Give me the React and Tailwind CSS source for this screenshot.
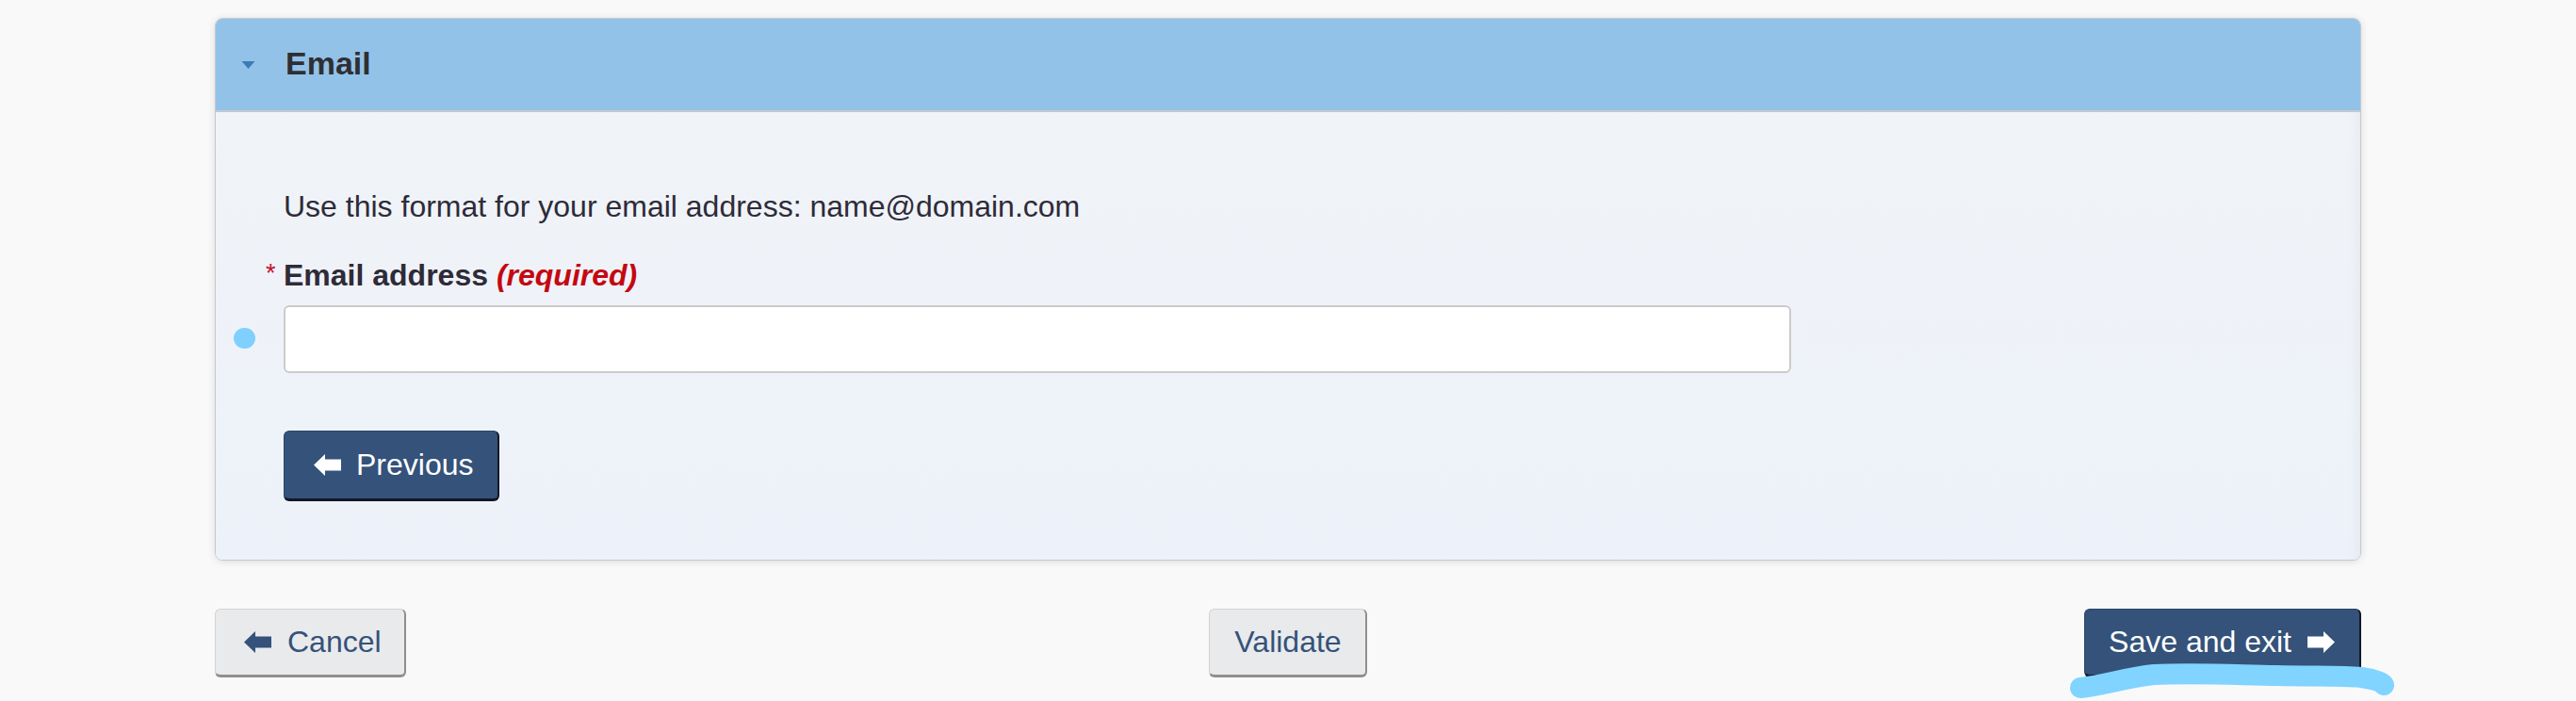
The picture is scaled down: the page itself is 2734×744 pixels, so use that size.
import React from "react";

function ArrowLeft({ className }) {
  return (
    <svg viewBox="0 0 29 23" className={className} fill="currentColor" aria-hidden="true">
      <polygon points="0,11.5 12,0 12,5.5 29,5.5 29,17.5 12,17.5 12,23" />
    </svg>
  );
}

function ArrowRight({ className }) {
  return (
    <svg viewBox="0 0 29 23" className={className} fill="currentColor" aria-hidden="true">
      <polygon points="29,11.5 17,0 17,5.5 0,5.5 0,17.5 17,17.5 17,23" />
    </svg>
  );
}

export default function App() {
  return (
    <div
      className="min-h-screen bg-[#f9f9f9] px-[228px] pt-[19px] pb-[20px]"
      style={{ fontFamily: '"Liberation Sans", Arial, sans-serif' }}
    >
      {/* Card */}
      <div className="rounded-[8px] border border-[#c5c9cd] shadow-[0_1px_8px_rgba(0,0,0,0.12)] overflow-hidden">
        <div className="h-[99px] bg-[#92c2e8] border-b-2 border-[#c1c9d1] flex items-center pl-[27px] pb-[3px]">
          <svg viewBox="0 0 14 8" className="w-[15px] h-[8px] text-[#3a7cb8] mt-[3px]" fill="currentColor">
            <polygon points="0,0 14,0 7,8" />
          </svg>
          <h2 className="ml-[32px] text-[34px] font-bold text-[#2f2f33] leading-[40px]">Email</h2>
        </div>
        <div className="bg-gradient-to-b from-[#f0f3f7] to-[#edf2fa] pl-[72px] pt-[78px] pb-[62px] shadow-[inset_-14px_0_14px_-12px_rgba(0,0,0,0.05)]">
          <p className="text-[32px] leading-[45px] text-[#2e2b38]">
            Use this format for your email address: name@domain.com
          </p>
          <label className="relative block mt-[28px] text-[32px] leading-[45px] font-bold text-[#2e2b38]">
            <span className="absolute left-[-19px] top-[-2px] text-[#c8102e] text-[27px] font-normal">*</span>
            Email address <em className="text-[#c40812]">(required)</em>
          </label>
          <div className="relative mt-[9px]">
            <span className="absolute left-[-53px] top-[24px] w-[23px] h-[22px] rounded-full bg-[#80d0ff]" />
            <input
              type="text"
              className="block h-[72px] w-[1600px] rounded-[6px] border-2 border-[#cbcbcb] bg-white outline-none"
            />
          </div>
          <button className="mt-[61px] flex items-center rounded-[6px] bg-[#34527a] border border-[#2b4565] border-b-[3px] border-r-[2px] border-b-[#111827] border-r-[#111827] pl-[31px] pr-[25px] py-[13px] text-white text-[32px] leading-[45px]">
            <ArrowLeft className="w-[29px] h-[23px]" />
            <span className="ml-[16px]">Previous</span>
          </button>
        </div>
      </div>

      {/* Bottom buttons */}
      <div className="mt-[51px] grid grid-cols-3 items-start">
        <div className="justify-self-start">
          <button className="flex items-center rounded-[6px] bg-[#e9eaec] border border-[#d3d3d3] border-b-[3px] border-r-[2px] border-b-[#8f8f8f] border-r-[#8f8f8f] pl-[30px] pr-[24px] py-[12px] text-[#34527a] text-[32px] leading-[45px]">
            <ArrowLeft className="w-[29px] h-[23px]" />
            <span className="ml-[17px]">Cancel</span>
          </button>
        </div>
        <div className="justify-self-center">
          <button className="rounded-[6px] bg-[#e9eaec] border border-[#d3d3d3] border-b-[3px] border-r-[2px] border-b-[#8f8f8f] border-r-[#8f8f8f] pl-[26px] pr-[25px] py-[12px] text-[#34527a] text-[32px] leading-[45px]">
            Validate
          </button>
        </div>
        <div className="justify-self-end relative">
          <button className="relative z-0 flex items-center rounded-[6px] bg-[#34527a] border border-[#2b4565] border-b-[3px] border-r-[2px] border-b-[#111827] border-r-[#111827] pl-[25px] pr-[26px] py-[12px] text-white text-[32px] leading-[45px]">
            <span>Save and exit</span>
            <ArrowRight className="ml-[17px] w-[29px] h-[23px]" />
          </button>
          <svg
            className="absolute left-[-16px] top-[55px] w-[350px] h-[44px] z-10 pointer-events-none"
            viewBox="0 0 350 44"
            fill="none"
          >
            <path
              d="M12 29 C 40 26, 60 18, 90 15 C 130 13, 170 15, 220 16 C 260 17, 290 16, 310 18 C 325 20, 332 23, 334 26"
              stroke="#80d4ff"
              strokeWidth="22"
              strokeLinecap="round"
              strokeLinejoin="round"
            />
          </svg>
        </div>
      </div>
    </div>
  );
}
